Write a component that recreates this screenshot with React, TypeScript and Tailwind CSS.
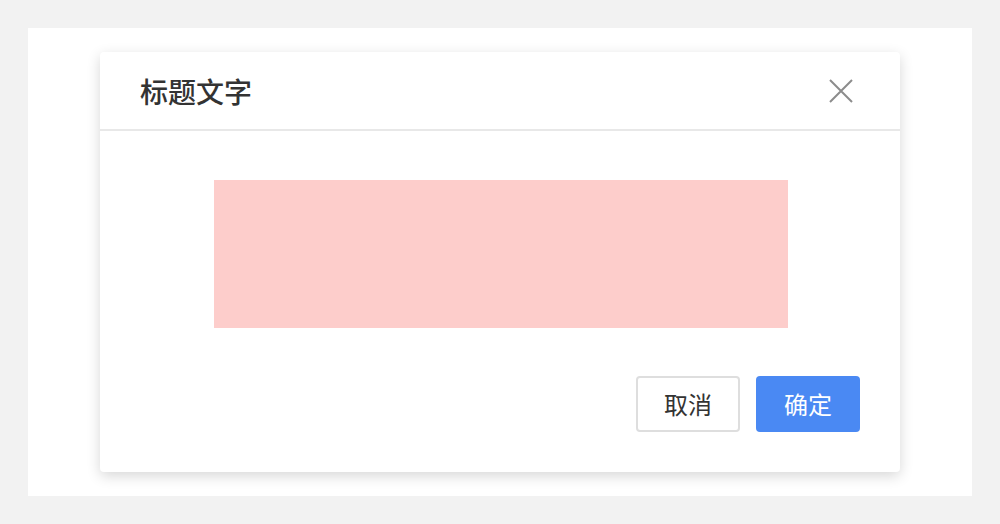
export default function App() {
  return (
    <div
      className="w-[1000px] h-[524px] bg-[#f2f2f2] p-[28px]"
      style={{ fontFamily: '"Noto Sans CJK SC", "Noto Sans", sans-serif' }}
    >
      <div className="h-full bg-white pt-[24px] pl-[72px]">
        <div className="w-[800px] h-[420px] bg-white rounded-[4px] shadow-[0_4px_14px_rgba(0,0,0,0.16)] flex flex-col">
          {/* header */}
          <div className="h-[79px] border-b-2 border-[#e8e8e8] flex items-center justify-between pl-[40px] pr-[47px]">
            <h1 className="text-[28px] leading-none font-medium text-[#333333]">标题文字</h1>
            <button className="w-[24px] h-[24px] flex items-center justify-center">
              <svg width="24" height="24" viewBox="0 0 24 24" fill="none">
                <path d="M1 1L23 23M23 1L1 23" stroke="#8c8c8c" strokeWidth="2" />
              </svg>
            </button>
          </div>
          {/* body */}
          <div className="flex-1 flex flex-col items-center pt-[49px] pl-[2px]">
            <div className="w-[574px] h-[148px] bg-[#fdcdcb]" />
          </div>
          {/* footer */}
          <div className="flex justify-end gap-[16px] pr-[40px] pb-[40px]">
            <button className="w-[104px] h-[56px] rounded-[4px] border-2 border-[#dedede] bg-white text-[24px] text-[#333333]">
              取消
            </button>
            <button className="w-[104px] h-[56px] rounded-[4px] bg-[#4a89f3] text-[24px] text-white">
              确定
            </button>
          </div>
        </div>
      </div>
    </div>
  );
}
